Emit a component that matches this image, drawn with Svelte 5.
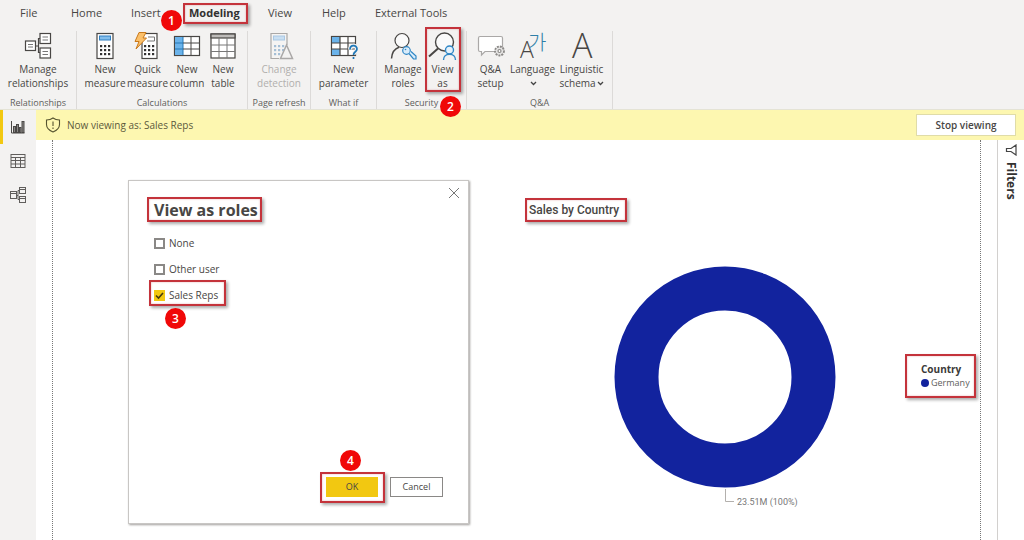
<script>
  const tabs = ['File', 'Home', 'Insert', 'Modeling', 'View', 'Help', 'External Tools'];
  let roles = $state([
    { name: 'None', on: false },
    { name: 'Other user', on: false },
    { name: 'Sales Reps', on: true }
  ]);
  const groups = [
    { name: 'Relationships', id: 'rel', items: [{ icon: 'relations', a: 'Manage', b: 'relationships' }] },
    {
      name: 'Calculations', id: 'calc', items: [
        { icon: 'calc', a: 'New', b: 'measure' },
        { icon: 'quick', a: 'Quick', b: 'measure' },
        { icon: 'column', a: 'New', b: 'column' },
        { icon: 'table', a: 'New', b: 'table' }
      ]
    },
    { name: 'Page refresh', id: 'refresh', items: [{ icon: 'change', a: 'Change', b: 'detection', off: true }] },
    { name: 'What if', id: 'what', items: [{ icon: 'param', a: 'New', b: 'parameter' }] },
    {
      name: 'Security', id: 'sec', items: [
        { icon: 'roles', a: 'Manage', b: 'roles' },
        { icon: 'viewas', a: 'View', b: 'as', mark: '2' }
      ]
    },
    {
      name: 'Q&A', id: 'qa', items: [
        { icon: 'qa', a: 'Q&A', b: 'setup' },
        { icon: 'lang', a: 'Language', b: '', drop: true },
        { icon: 'ling', a: 'Linguistic', b: 'schema', drop: true }
      ]
    }
  ];
</script>

{#snippet calcKeys(color)}
  {#each [13, 17, 21] as y}
    {#each [9, 13, 17] as x}
      <rect {x} {y} width="2.200" height="2.200" fill={color} stroke="none" />
    {/each}
  {/each}
{/snippet}

{#snippet icon(kind)}
  <svg class="icon" width="28" height="28" viewBox="0 0 28 28" fill="none" stroke="#484644" stroke-width="1.200" aria-hidden="true">
    {#if kind === 'relations'}
      <path d="M11.500 14H14.500M14.500 14V6.500H17M14.500 14V20.500H17" />
      <rect x="1.500" y="9" width="10" height="9.500" fill="#fff" />
      <rect x="16" y="1.500" width="10.500" height="10" fill="#fff" />
      <rect x="16" y="16" width="10.500" height="10" fill="#fff" />
      <path d="M4 12.500H9M4 15H9M18.500 5H24M18.500 8H24M18.500 19.500H24M18.500 22.500H24" stroke-width="1" stroke="#777" />
    {:else if kind === 'calc'}
      <rect x="6" y="1.500" width="16" height="25" fill="#fff" />
      <rect x="8.500" y="4" width="11" height="4" fill="#83beec" stroke="#2f7fc1" stroke-width="1" />
      {@render calcKeys('#333')}
    {:else if kind === 'quick'}
      <rect x="8" y="1.500" width="15" height="25" fill="#fff" />
      <path d="M14 5H20.500V9H13" stroke="#777" stroke-width="1" />
      <g transform="translate(1 0)">{@render calcKeys('#333')}</g>
      <path d="M5 .5H12L9 6H12.500L2 17L5 9.500H1Z" fill="#fbc06a" stroke="#c9791b" stroke-width="1" />
    {:else if kind === 'column'}
      <rect x="1.500" y="4.500" width="25" height="19" fill="#fff" />
      <rect x="2" y="5" width="8" height="18" fill="#6bb3ea" stroke="none" />
      <path d="M2 11H10M2 17H10M10 5V23" stroke="#2577b5" stroke-width="1" />
      <path d="M10 11H26M10 17H26M18 5V23" stroke-width="1" />
    {:else if kind === 'table'}
      <rect x="2" y="2" width="24" height="24" fill="#fff" />
      <rect x="2" y="2" width="24" height="4" fill="#bdbbb9" />
      <path d="M2 13H26M2 19.500H26M10 6V26M18 6V26" stroke-width="1" stroke="#777" />
    {:else if kind === 'change'}
      <g stroke="#aaa8a7">
        <path d="M14 26.500H6V1.500H22V13" fill="#f5f4f3" />
        <rect x="8.500" y="4" width="11" height="4" fill="#c9dff2" stroke="#a9c8e4" stroke-width="1" />
        {@render calcKeys('#a5bfd6')}
        <path d="M21.500 13L27.500 26.500H15.500Z" fill="#f3f2f1" stroke-width="1.500" />
      </g>
    {:else if kind === 'param'}
      <rect x="1.500" y="4.500" width="24" height="19" fill="#fff" />
      <rect x="2" y="5" width="8" height="6" fill="#6bb3ea" stroke="none" />
      <rect x="2" y="17" width="8" height="6" fill="#6bb3ea" stroke="none" />
      <path d="M2 11H25M2 17H25M10 5V23M18 5V23" />
      <path d="M20 17.500C20 12.500 27 12.500 27 17C27 20 23.500 19.500 23.500 23" stroke="#f3f2f1" stroke-width="4" />
      <path d="M20 17.500C20 12.500 27 12.500 27 17C27 20 23.500 19.500 23.500 23M23.500 25V27" stroke="#1f78b8" stroke-width="1.700" />
    {:else if kind === 'roles'}
      <circle cx="13" cy="8.500" r="7" fill="#fafafa" />
      <path d="M2.500 26.500C3 20 6 16.500 10 15.200M16 15.200L18 16" stroke-width="1.500" />
      <circle cx="17.500" cy="18.500" r="3.800" fill="#d9ecfa" stroke="#2f86c5" />
      <path d="M20 21.500L24.500 27H27V24L22 19.500" fill="#d9ecfa" stroke="#2f86c5" />
      <circle cx="16.500" cy="17.500" r=".8" fill="#2f86c5" stroke="none" />
    {:else if kind === 'viewas'}
      <circle cx="15.500" cy="10" r="9" fill="#fafafa" stroke-width="1.400" />
      <path d="M9 16.500L0 24.500" stroke-width="2" />
      <circle cx="20.500" cy="18" r="4" fill="#e4f1fb" stroke="#2f86c5" stroke-width="1.400" />
      <path d="M14.500 28C14.500 24.500 17 22.300 20.500 22.300S26.500 24.500 26.500 28" fill="#f3f2f1" stroke="#2f86c5" stroke-width="1.400" />
    {:else if kind === 'qa'}
      <path d="M3 4.500H24Q25.500 4.500 25.500 6V18Q25.500 19.500 24 19.500H8L4.500 23V19.500H3Q1.500 19.500 1.500 18V6Q1.500 4.500 3 4.500Z" fill="#fff" stroke="#aaa8a7" />
      <circle cx="22.500" cy="19" r="4.500" fill="#e6e5e4" stroke="#8a8886" stroke-dasharray="2 1" stroke-width="1.800" />
      <circle cx="22.500" cy="19" r="1.500" fill="#fff" stroke="#8a8886" />
    {:else if kind === 'lang'}
      <text class="latin" x="1" y="26" font-size="23">A</text>
      <text class="hangul" x="9" y="18" font-size="20">가</text>
    {:else if kind === 'ling'}
      <text class="latin" x="4" y="26" font-size="34">A</text>
    {/if}
  </svg>
{/snippet}

<div class="app">
  <header>
    <nav class="tabs" aria-label="Ribbon tabs">
      {#each tabs as tab}
        <a href="#{tab}" class:active={tab === 'Modeling'}>
          {tab}
          {#if tab === 'Modeling'}<span class="box box-tab"></span><span class="badge badge-1">1</span>{/if}
        </a>
      {/each}
    </nav>
    <div class="ribbon">
      {#each groups as g}
        <section class="group {g.id}">
          <div class="items">
            {#each g.items as it}
              <button class="tool" disabled={it.off}>
                {@render icon(it.icon)}
                <span>{it.a}</span>
                <span class="second">{it.b}{#if it.drop}<svg class="chev" width="7" height="5" viewBox="0 0 7 5"><path d="M1 1L3.500 3.500L6 1" fill="none" stroke="#444" stroke-width="1.300" /></svg>{/if}</span>
                {#if it.mark}<span class="box box-view"></span><span class="badge badge-2">2</span>{/if}
              </button>
            {/each}
          </div>
          <h2>{g.name}</h2>
        </section>
      {/each}
    </div>
  </header>

  <div class="body">
    <aside class="rail">
      <button class="current" aria-label="Report view">
        <svg width="14" height="14" viewBox="0 0 14 14" fill="#8a8886" stroke="#4a4846"><path d="M.5 1V13H13.500" fill="none" /><rect x="2.500" y="6.500" width="2" height="6" /><rect x="5.500" y="4.500" width="2" height="8" /><rect x="8.500" y="7.500" width="1.500" height="5" /><rect x="11" y="1.500" width="2" height="11" /></svg>
      </button>
      <button aria-label="Data view">
        <svg width="16" height="14" viewBox="0 0 16 14" fill="none" stroke="#605e5c"><rect x="1" y=".5" width="14" height="13" /><path d="M1 3.500H15M1 6.500H15M1 10H15M5.500 3.500V13M10.500 3.500V13" /></svg>
      </button>
      <button aria-label="Model view">
        <svg width="18" height="18" viewBox="0 0 18 18" fill="none" stroke="#605e5c"><rect x="1.500" y="5.500" width="6" height="7" /><rect x="10.500" y="1.500" width="6" height="6" /><rect x="10.500" y="10.500" width="6" height="6" /><path d="M1.500 7.500H7M10.500 3.500H16.500M10.500 12.500H16.500M7.500 9.500H9M9 4.500V13.500M9 4.500H10.500M9 13.500H10.500" /></svg>
      </button>
    </aside>

    <div class="work">
      <div class="banner" role="status">
        <svg width="16" height="16" viewBox="0 0 16 16" fill="none" stroke="#55532f" stroke-width="1.100"><path d="M8 1C6 2.500 4 3 1.500 3V7.500C1.500 11 4.500 13.500 8 15C11.500 13.500 14.500 11 14.500 7.500V3C12 3 10 2.500 8 1ZM8 4.500V9M8 10.500V12" /></svg>
        <p>Now viewing as: Sales Reps</p>
        <button class="stop">Stop viewing</button>
      </div>

      <div class="stage">
        <main class="page">
          <form class="dialog" aria-labelledby="dialog-title" onsubmit={(e) => e.preventDefault()}>
            <button type="button" class="close" aria-label="Close">
              <svg width="12" height="12" viewBox="0 0 12 12" stroke="#777" stroke-width="1"><path d="M1 1L11 11M11 1L1 11" /></svg>
            </button>
            <h1 id="dialog-title">View as roles<span class="box box-title"></span></h1>
            <div class="roles">
              {#each roles as r}
                <label><input type="checkbox" bind:checked={r.on} /><span>{r.name}</span>
                  {#if r.name === 'Sales Reps'}<span class="box box-role"></span><span class="badge badge-3">3</span>{/if}
                </label>
              {/each}
            </div>
            <div class="actions">
              <button class="ok">OK<span class="box box-ok"></span><span class="badge badge-4">4</span></button>
              <button type="button" class="cancel">Cancel</button>
            </div>
          </form>

          <section class="chart">
            <h2>Sales by Country<span class="box box-chart"></span></h2>
            <div class="plot">
              <svg class="donut" width="222" height="248" viewBox="0 0 222 248" role="img" aria-label="Germany 23.51M (100%)">
                <circle cx="111" cy="111" r="88.500" fill="none" stroke="#12239e" stroke-width="44" />
                <path d="M111.500 223V235.500H120" fill="none" stroke="#b3b0ad" />
                <text x="123" y="239">23.51M (100%)</text>
              </svg>
              <div class="legend">
                <strong>Country</strong>
                <span class="entry"><i></i>Germany</span>
                <span class="box box-legend"></span>
              </div>
            </div>
          </section>
        </main>
        <aside class="filters">
          <svg width="12" height="12" viewBox="0 0 12 12" fill="none" stroke="#444" stroke-width="1.200"><path d="M11 1V11L6 7.500H1.500V4.500H6Z" /></svg>
          <span>Filters</span>
        </aside>
      </div>
    </div>
  </div>
</div>

<style>
  :global(body) { margin: 0; }
  .app {
    min-height: 100vh;
    display: flex;
    flex-direction: column;
    background: #fff;
    color: #484644;
    font: 10px/14px "Open Sans", "Noto Sans", sans-serif;
  }
  button { font: inherit; color: inherit; border: 0; background: none; padding: 0; cursor: pointer; }
  h1, h2, p { margin: 0; }

  header { background: #f3f2f1; border-bottom: 1px solid #e4e3d5; }
  .tabs {
    display: grid;
    grid-template-columns: 51px 60px 58px 79px 54px 53px auto;
    padding: 3px 0 0 20px;
    font-size: 11px;
    line-height: 20px;
  }
  .tabs a { color: inherit; text-decoration: none; position: relative; white-space: nowrap; justify-self: start; }
  .tabs .active { font-weight: 700; color: #323130; }

  .ribbon { display: flex; padding-top: 8px; }
  .group {
    box-sizing: border-box;
    display: flex;
    flex-direction: column;
    align-items: center;
    border-right: 1px solid #dcdad8;
    flex: none;
    min-height: 78px;
    padding-top: 1px;
  }
  .rel { width: 77px; }
  .calc { width: 171px; }
  .refresh { width: 63px; }
  .what { width: 66px; }
  .sec { width: 90px; }
  .qa { width: 146px; }
  .items { display: grid; grid-auto-flow: column; }
  .calc .items { grid-template-columns: 43px 42px 37px 35px; }
  .sec .items { grid-template-columns: 42px 37px; }
  .qa .items { grid-template-columns: 36px 48px 50px; }
  .tool { position: relative; display: flex; flex-direction: column; align-items: center; white-space: nowrap; }
  .tool:disabled { color: #b1afad; }
  .icon { display: block; margin-bottom: 2px; overflow: visible; }
  .icon text { stroke: none; fill: #484644; font-weight: 300; }
  .icon .latin { font-family: "Open Sans", sans-serif; }
  .icon .hangul { font-family: "Noto Sans CJK KR", sans-serif; fill: #2f7fa8; }
  .second { height: 14px; display: flex; align-items: center; }
  .chev { margin-left: 1px; }
  .group h2 { font-size: 9px; font-weight: 400; line-height: 12px; margin-top: 7px; color: #605e5c; white-space: nowrap; }

  .body { flex: 1; display: flex; }
  .rail { width: 36px; flex: none; background: #f3f2f1; }
  .rail button { display: flex; align-items: center; justify-content: center; width: 100%; height: 34px; box-sizing: border-box; }
  .rail .current { border-left: 3px solid #f2c811; padding-right: 3px; }
  .work { flex: 1; min-width: 0; display: flex; flex-direction: column; }
  .banner { display: flex; align-items: center; gap: 6px; background: #fdf7b0; height: 30px; padding: 0 8px 0 9px; color: #5c5a3c; }
  .banner p { flex: 1; }
  .stop { width: 100px; height: 22px; background: #fff; border: 1px solid #e0dca8; font-weight: 600; color: #484644; }
  .stage { flex: 1; display: flex; }
  .page {
    flex: 1;
    display: flex;
    align-items: flex-start;
    margin: 0 16px;
    padding: 40px 0 16px 75px;
    border: dotted #777;
    border-width: 0 1px;
  }
  .filters {
    width: 27px;
    flex: none;
    border-left: 1px solid #d2d0ce;
    display: flex;
    flex-direction: column;
    align-items: center;
    gap: 6px;
    padding-top: 4px;
    box-sizing: border-box;
    font-size: 12px;
    font-weight: 700;
    color: #323130;
  }
  .filters span { writing-mode: vertical-rl; }

  .dialog {
    position: relative;
    box-sizing: border-box;
    flex: none;
    width: 341px;
    min-height: 344px;
    display: flex;
    flex-direction: column;
    padding: 18px 25px 26px;
    border: 1px solid #c8c6c4;
    box-shadow: 1px 1px 2px #a19f9d;
    background: #fff;
  }
  .close { position: absolute; top: 6px; right: 8px; width: 12px; height: 12px; display: flex; }
  h1 { position: relative; align-self: flex-start; font-size: 16px; line-height: 22px; font-weight: 700; color: #484644; white-space: nowrap; }
  .roles { display: grid; gap: 12px; margin-top: 15px; justify-items: start; }
  label { position: relative; display: flex; align-items: center; gap: 4px; }
  input { appearance: none; box-sizing: border-box; width: 11px; height: 11px; margin: 0; border: 2px solid #8a8886; background: #fff; }
  input:checked { border: 0; background: #f2c811 url("data:image/svg+xml,%3Csvg xmlns='http://www.w3.org/2000/svg' viewBox='0 0 11 11'%3E%3Cpath d='M2 5.500L4.500 8L9 3' fill='none' stroke='%23443a10' stroke-width='1.600'/%3E%3C/svg%3E"); }
  .actions { display: flex; justify-content: flex-end; gap: 12px; margin-top: auto; font-size: 9px; }
  .ok { position: relative; width: 52px; height: 20px; background: #f2c811; }
  .cancel { width: 53px; height: 20px; border: 1px solid #8a8886; box-sizing: border-box; }

  .chart { flex: 1; min-width: 0; padding-top: 21px; }
  .chart h2 { position: relative; width: fit-content; margin-left: 60px; font: 500 12px/18px Roboto, sans-serif; color: #484644; white-space: nowrap; }
  .plot { display: grid; grid-template-columns: 1fr 222px 1fr; margin-top: 47px; }
  .donut { grid-column: 2; display: block; overflow: visible; }
  .donut text { font: 9px Roboto, sans-serif; fill: #777; }
  .legend { position: relative; justify-self: end; align-self: start; width: 59px; margin: 96px 0 0; display: grid; line-height: 14px; font-size: 9px; color: #605e5c; }
  .legend strong { font-size: 10px; color: #3b3a39; }
  .entry { display: flex; align-items: center; gap: 2px; }
  .entry i { width: 8px; height: 8px; border-radius: 50%; background: #12239e; }

  .box { position: absolute; border: 2px solid #c4333b; box-shadow: 2px 2px 3px #0005, inset 0 0 2px #c4333b66; pointer-events: none; }
  .box-tab { inset: 0 -8px -1px -6px; }
  .box-view { inset: -5px 0 -2px 1px; }
  .box-title { inset: -2px -4px -1px -7px; }
  .box-role { inset: -8px -8px -4px -5px; }
  .box-ok { inset: -5px -7px -6px -6px; }
  .box-chart { inset: -3px -8px -3px -4px; }
  .box-legend { inset: -8px 4px -8px -16px; }
  .badge {
    position: absolute;
    width: 21px;
    height: 21px;
    border-radius: 50%;
    background: #f00808;
    color: #fff;
    font: 600 12px/21px "Open Sans", sans-serif;
    text-align: center;
  }
  .badge-1 { left: -28px; top: 7px; }
  .badge-2 { left: 16px; top: 64px; }
  .badge-3 { left: 11px; top: 20px; }
  .badge-4 { left: 14px; top: -27px; }
</style>
